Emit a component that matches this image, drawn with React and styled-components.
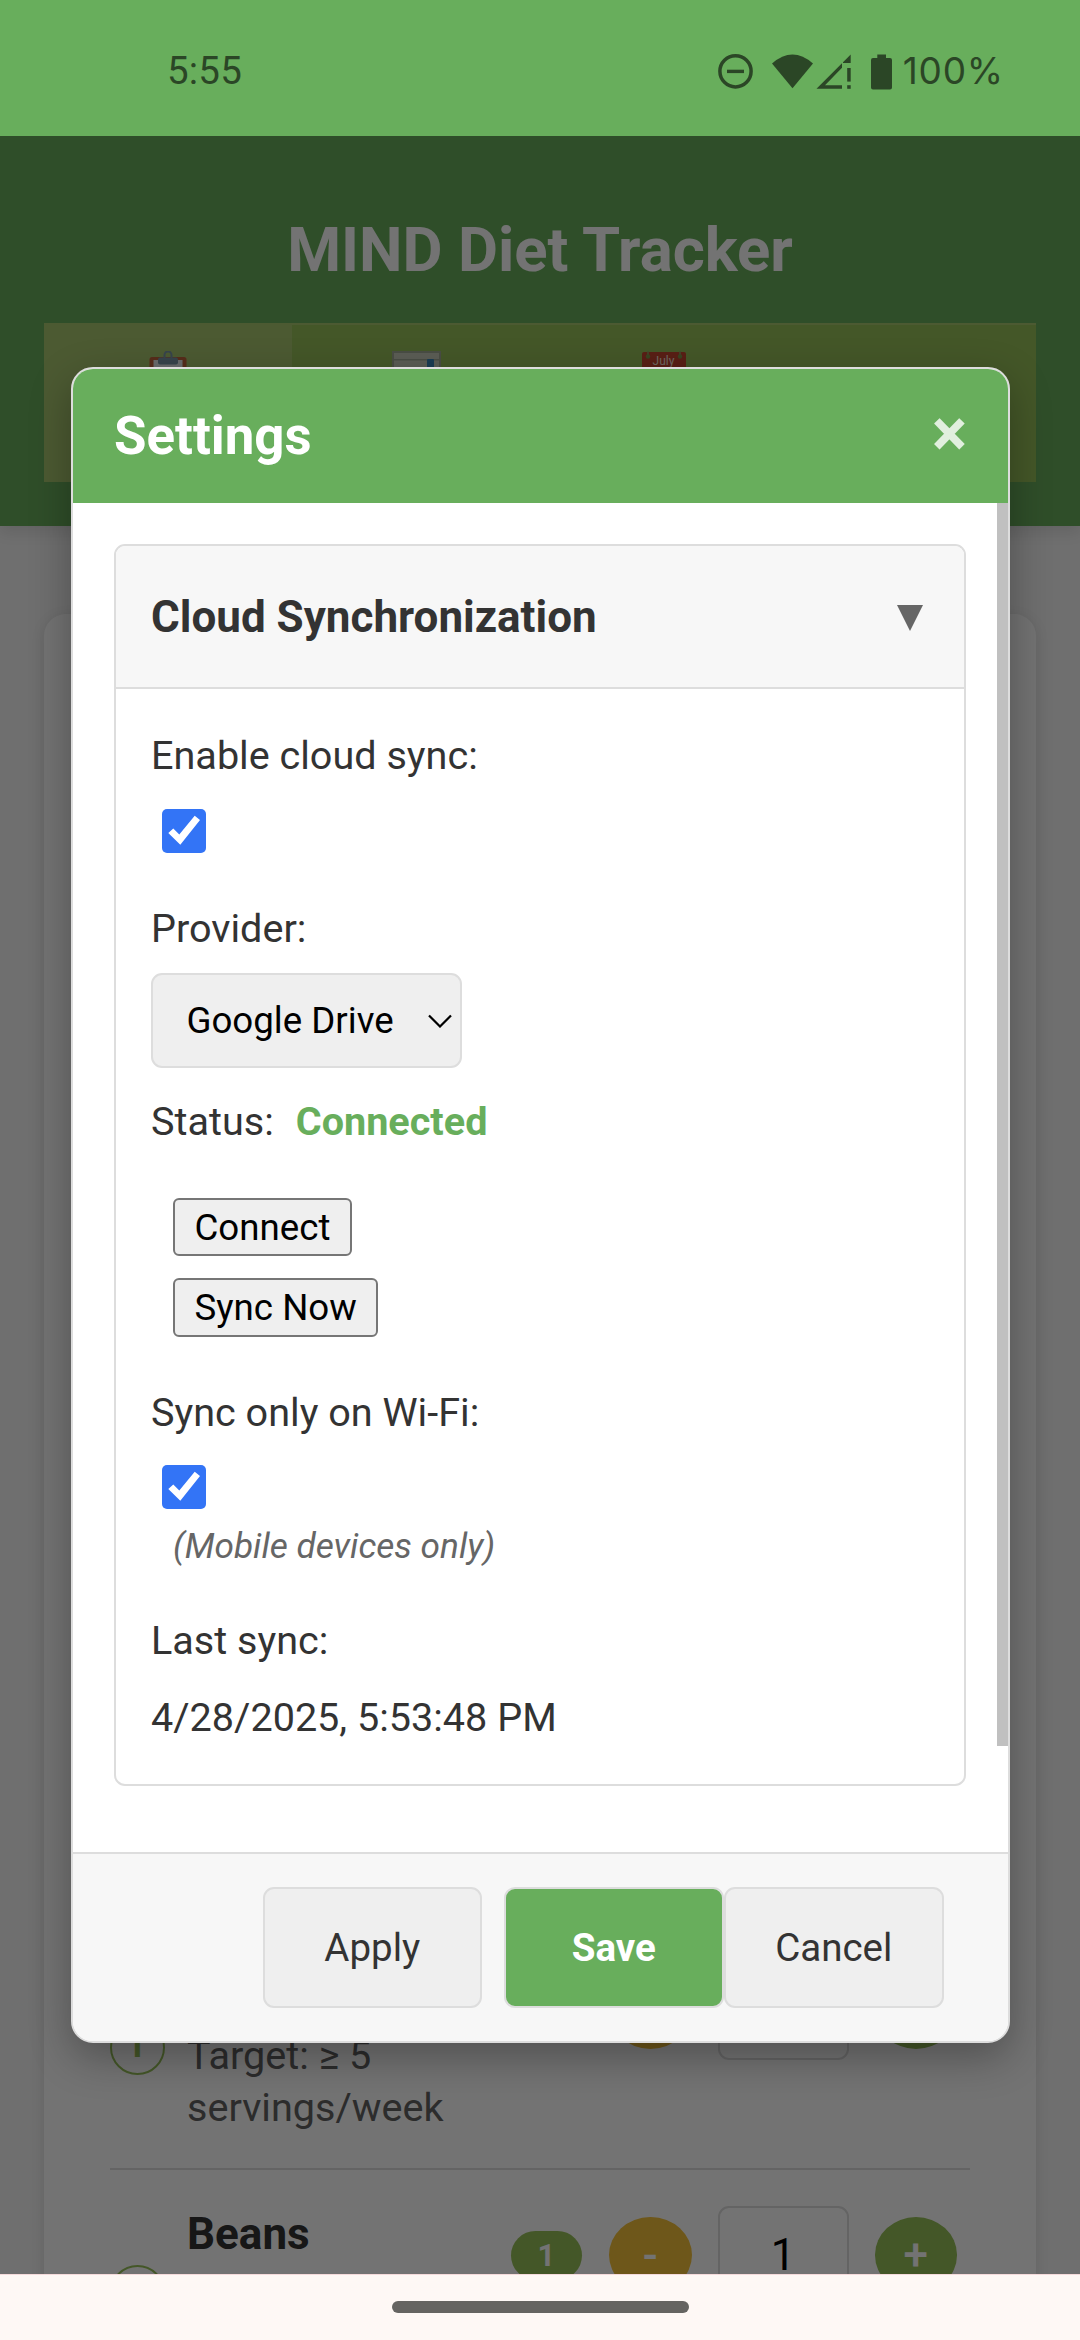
import React, { useState } from "react";
import styled, { createGlobalStyle, css } from "styled-components";

const GREEN = "#68ae5c";
const OLIVE = "#97c159";
const LINE = "#dddddd";

const GlobalStyle = createGlobalStyle`
  *, *::before, *::after { box-sizing: border-box; }
  body { margin: 0; font-family: Roboto, "Noto Sans", sans-serif; color: #333; }
  button, input, select { font-family: inherit; margin: 0; }
`;

const Screen = styled.div`
  width: 1080px;
  height: 2340px;
  display: flex;
  flex-direction: column;
  overflow: hidden;
`;

/* ---------- system bars ---------- */

const StatusBar = styled.header`
  height: 136px;
  flex: none;
  display: flex;
  align-items: center;
  justify-content: space-between;
  padding: 5px 77px 0 167px;
  background: ${GREEN};
  color: #2b4626;
  font-family: Inter, Roboto, sans-serif;
  font-size: 37px;
  line-height: 44px;
`;

const Clock = styled.span`
  font-family: Roboto, sans-serif;
  font-size: 38.500px;
  letter-spacing: 0.2px;
`;

const StatusIcons = styled.div`
  display: flex;
  align-items: center;
  gap: 8px;
`;

const BatteryLevel = styled.span`
  letter-spacing: 0.8px;
  margin-right: -1px;
`;

const NavBar = styled.footer`
  height: 66px;
  flex: none;
  display: flex;
  justify-content: center;
  padding-top: 26px;
  background: #fef8f5;
  border-top: 1px solid #f5dadb;
`;

const NavHandle = styled.div`
  width: 297px;
  height: 12px;
  border-radius: 6px;
  background: #656461;
`;

/* ---------- tracker page ---------- */

const Viewport = styled.div`
  position: relative;
  flex: none;
  height: 2138px;
  overflow: hidden;
  background: #f5f5f5;
`;

const PageHeader = styled.div`
  height: 390px;
  padding: 77px 44px 0;
  background: ${GREEN};
  box-shadow: 0 6px 14px rgba(0, 0, 0, 0.1);
`;

const PageTitle = styled.h1`
  margin: 0;
  height: 110px;
  font-size: 61.6px;
  line-height: 74px;
  font-weight: 700;
  color: #fff;
  text-align: center;
`;

const TabBar = styled.nav`
  display: grid;
  grid-template-columns: repeat(4, 1fr);
  height: 159px;
  border-top: 2px solid #a9c870;
  background: ${OLIVE};
`;

const Tab = styled.div`
  display: flex;
  justify-content: center;
  padding-top: 26px;
  background: ${(p) => (p.$active ? "#a9c870" : "transparent")};
`;

const Card = styled.section`
  height: 1800px;
  margin: 88px 44px 0;
  padding: 1311.5px 66px 0;
  border-radius: 22px;
  background: #fff;
  box-shadow: 0 3px 14px rgba(0, 0, 0, 0.1);
`;

const FoodRow = styled.div`
  display: flex;
  align-items: flex-start;
  height: 244.5px;
  border-bottom: 2px solid ${LINE};
`;

const InfoBadge = styled.span`
  width: 55px;
  height: 55px;
  margin-top: 94.5px;
  border: 2px solid ${OLIVE};
  border-radius: 50%;
  color: ${OLIVE};
  font-size: 35px;
  line-height: 48px;
  font-weight: 700;
  text-align: center;
`;

const FoodText = styled.div`
  width: 310px;
  padding: 33.5px 0 0 22px;
`;

const FoodName = styled.div`
  min-height: 61.5px;
  color: #333;
  font-size: 44px;
  line-height: 61.5px;
  font-weight: 700;
`;

const FoodTarget = styled.div`
  width: 270px;
  margin-top: 9px;
  color: #626262;
  font-size: 39.6px;
  line-height: 52.5px;
`;

const Controls = styled.div`
  display: flex;
  align-items: center;
  height: 98px;
  margin: 36px 0 0 36px;
`;

const Total = styled.span`
  width: 71px;
  height: 49px;
  border-radius: 25px;
  background: ${OLIVE};
  color: #fff;
  font-size: 31px;
  line-height: 49px;
  font-weight: 700;
  text-align: center;
`;

const StepButton = styled.button`
  width: 82.5px;
  height: 76px;
  padding: 0;
  border: 0;
  border-radius: 50%;
  background: ${(p) => (p.$minus ? "#f4c13a" : OLIVE)};
  color: #fff;
  font-size: 44px;
  font-weight: 500;
  line-height: 76px;
`;

const Amount = styled.span`
  width: 131px;
  height: 98px;
  margin: 0 26px;
  border: 2px solid ${LINE};
  border-radius: 11px;
  color: #000;
  font-size: 44px;
  line-height: 95px;
  text-align: center;
`;

/* ---------- settings dialog ---------- */

const Backdrop = styled.div`
  position: absolute;
  inset: 0;
  display: flex;
  align-items: center;
  justify-content: center;
  background: rgba(0, 0, 0, 0.55);
`;

const Modal = styled.div`
  width: 939px;
  height: 1676px;
  margin-left: 1px;
  display: flex;
  flex-direction: column;
  overflow: hidden;
  border: 2px solid ${LINE};
  border-radius: 22px;
  background: #fff;
  box-shadow: 0 14px 41px rgba(0, 0, 0, 0.3);
`;

const ModalHeader = styled.div`
  flex: none;
  height: 134px;
  display: flex;
  align-items: center;
  justify-content: space-between;
  padding: 0 41px;
  background: ${GREEN};
  color: #fff;
`;

const ModalTitle = styled.h2`
  margin: 0;
  font-size: 52.8px;
  line-height: 62px;
  font-weight: 700;
`;

const CloseButton = styled.button`
  padding: 0 0 5px;
  border: 0;
  background: none;
  color: rgba(255, 255, 255, 0.8);
  font-size: 66px;
  line-height: 77px;
  height: 82px;
  font-weight: 700;
`;

const ModalBody = styled.div`
  flex: 1;
  display: flex;
  justify-content: space-between;
  min-height: 0;
`;

const ScrollThumb = styled.div`
  width: 11px;
  height: 1243px;
  background: #c0c0c0;
`;

const Section = styled.section`
  width: 852px;
  height: 1242px;
  margin: 41px 0 0 41px;
  border: 2px solid ${LINE};
  border-radius: 11px;
  overflow: hidden;
`;

const SectionHeader = styled.div`
  height: 143px;
  display: flex;
  align-items: center;
  justify-content: space-between;
  padding: 0 41px 0 35px;
  background: #f7f7f7;
  border-bottom: 2px solid ${LINE};
`;

const SectionTitle = styled.h3`
  margin: 0;
  font-size: 44px;
  line-height: 52px;
  font-weight: 700;
`;

const SectionBody = styled.div`
  display: flex;
  flex-direction: column;
  align-items: flex-start;
  gap: 51px;
  padding: 42px 35px 0;
`;

const Field = styled.div`
  display: flex;
  flex-direction: column;
  align-items: flex-start;
  gap: ${(p) => p.$gap || 0}px;
`;

const Label = styled.span`
  font-size: 39.6px;
  line-height: 49px;
`;

const Status = styled(Label)`
  margin-top: 9px;
`;

const StatusValue = styled.strong`
  margin-left: 22px;
  color: ${GREEN};
`;

const Check = styled.button`
  width: 44px;
  height: 44px;
  margin-left: 11px;
  padding: 0;
  border: 0;
  border-radius: 5px;
  background: #3374f6;
  display: block;
`;

const Hint = styled.em`
  margin: -12px 0 -2px 22px;
  color: #666;
  font-size: 35.2px;
  line-height: 42px;
`;

const Select = styled.div`
  display: flex;
  align-items: center;
  justify-content: space-between;
  width: 311px;
  height: 95px;
  padding: 0 8.5px 0 33.5px;
  border: 2px solid ${LINE};
  border-radius: 11px;
  background: #efefef;
  color: #000;
  font-size: 36.67px;
  line-height: 44px;
`;

const Actions = styled.div`
  display: flex;
  flex-direction: column;
  align-items: flex-start;
  gap: 22px;
  margin: 1px 0 0 22px;
`;

const PlainButton = styled.button`
  height: ${(p) => p.$height}px;
  padding: 0 19.5px;
  border: 2px solid #767676;
  border-radius: 6px;
  background: #efefef;
  color: #000;
  font-size: 36.67px;
  line-height: 43px;
`;

const ModalFooter = styled.div`
  flex: none;
  height: 189px;
  display: flex;
  justify-content: flex-end;
  padding: 33px 64.5px 0 0;
  border-top: 2px solid ${LINE};
  background: #f7f7f7;
`;

const FooterButton = styled.button`
  width: 219.5px;
  height: 121px;
  padding: 0;
  margin-left: ${(p) => p.$gap}px;
  border: 2px solid ${LINE};
  border-radius: 11px;
  background: #efefef;
  color: #333;
  font-size: 38.5px;
  ${(p) =>
    p.$primary &&
    css`
      background: ${GREEN};
      color: #fff;
      font-weight: 700;
    `}
`;

/* ---------- drawings ---------- */

const SystemIcons = () => (
  <svg width="180" height="40" viewBox="714 50 180 40" fill="currentColor">
    <circle cx="734.5" cy="70.3" r="15.6" fill="none" stroke="currentColor" strokeWidth="3.5" />
    <rect x="726" y="68.7" width="17" height="3.4" />
    <path d="M771 62.6Q791.5 44.6 812 62.6L791.5 87.3Z" />
    <path d="M815.5 87.8L841 62.2V66.8L824 84.2H841V87.8ZM842 61.2L849.7 53.4V62H842Z" />
    <rect x="846.2" y="67" width="3.5" height="13.6" />
    <rect x="846.2" y="84.2" width="3.5" height="3.6" />
    <path d="M876.3 53.6H885V57H889Q891 57 891 59V86.6Q891 88.6 889 88.6H872Q870 88.6 870 86.6V59Q870 57 872 57H876.3Z" />
  </svg>
);

const ClipboardIcon = () => (
  <svg width="40" height="50" viewBox="0 0 40 50">
    <rect x="1.5" y="6" width="37" height="44" rx="2.5" fill="#c1653d" />
    <rect x="5.5" y="9" width="29" height="40" fill="#eceff1" />
    <path d="M16.500 8V4a3.500 3.500 0 0 1 7 0V8" fill="none" stroke="#7a98a8" strokeWidth="2" />
    <rect x="10" y="6.500" width="20" height="7" rx="2" fill="#7a98a8" />
  </svg>
);

const ChartIcon = () => (
  <svg width="49" height="50" viewBox="0 0 49 50">
    <rect width="49" height="50" fill="#a2ab97" />
    <rect x="2" y="2" width="45" height="48" fill="#c9cfbd" />
    <rect y="8" width="49" height="1.500" fill="#a2ab97" />
    <rect x="35" y="8" width="7" height="42" rx="1" fill="#3b86b8" />
  </svg>
);

const CalendarIcon = () => (
  <svg width="44" height="50" viewBox="0 0 44 50">
    <rect y="1" width="44" height="49" rx="2" fill="#c5452f" />
    <path d="M6 0V5M38 0V5" stroke="#97a06a" strokeWidth="1.500" />
    <circle cx="6" cy="5.500" r="2.200" fill="#7e9a4a" />
    <circle cx="38" cy="5.500" r="2.200" fill="#7e9a4a" />
    <text x="21.500" y="13.500" textAnchor="middle" fontSize="12" fontFamily="Roboto, sans-serif" fill="#f2e6d8">
      July
    </text>
  </svg>
);

const TickMark = () => (
  <svg width="44" height="44" viewBox="0 0 44 44">
    <path d="M32.7 6.700L38 11L18.300 35.700L6.300 24L11.300 19.500L17.300 25.500Z" fill="#fff" />
  </svg>
);

const ArrowDown = () => (
  <svg width="26" height="28" viewBox="0 -2 26 28">
    <path d="M0 0H26L13 26Z" fill="#666" />
  </svg>
);

const Chevron = () => (
  <svg width="24" height="14" viewBox="0 0 24 14">
    <path d="M1 1.500L12 12.500L23 1.500" fill="none" stroke="#000" strokeWidth="2.200" />
  </svg>
);

function Food({ name, target, total }) {
  return (
    <FoodRow>
      <InfoBadge>i</InfoBadge>
      <FoodText>
        <FoodName>{name}</FoodName>
        <FoodTarget>{target}</FoodTarget>
      </FoodText>
      <Controls>
        <Total style={{ marginRight: 27 }}>{total}</Total>
        <StepButton $minus>-</StepButton>
        <Amount>{total}</Amount>
        <StepButton>+</StepButton>
      </Controls>
    </FoodRow>
  );
}

function Checkbox({ label }) {
  const [on, setOn] = useState(true);
  return (
    <Check role="checkbox" aria-checked={on} aria-label={label} onClick={() => setOn(!on)}>
      {on && <TickMark />}
    </Check>
  );
}

export default function App() {
  return (
    <Screen>
      <GlobalStyle />
      <StatusBar>
        <Clock>5:55</Clock>
        <StatusIcons>
          <SystemIcons />
          <BatteryLevel>100%</BatteryLevel>
        </StatusIcons>
      </StatusBar>
      <Viewport>
        <PageHeader>
          <PageTitle>MIND Diet Tracker</PageTitle>
          <TabBar>
            <Tab $active><ClipboardIcon /></Tab>
            <Tab><ChartIcon /></Tab>
            <Tab><CalendarIcon /></Tab>
            <Tab />
          </TabBar>
        </PageHeader>
        <Card>
          <Food target="Target: ≥ 5 servings/week" />
          <Food name="Beans" total="1" />
        </Card>
        <Backdrop>
          <Modal role="dialog" aria-label="Settings">
            <ModalHeader>
              <ModalTitle>Settings</ModalTitle>
              <CloseButton>×</CloseButton>
            </ModalHeader>
            <ModalBody>
              <Section>
                <SectionHeader>
                  <SectionTitle>Cloud Synchronization</SectionTitle>
                  <ArrowDown />
                </SectionHeader>
                <SectionBody>
                  <Field $gap={29}>
                    <Label>Enable cloud sync:</Label>
                    <Checkbox label="Enable cloud sync" />
                  </Field>
                  <Field $gap={20}>
                    <Label>Provider:</Label>
                    <Select>
                      Google Drive
                      <Chevron />
                    </Select>
                    <Status>
                      Status:<StatusValue>Connected</StatusValue>
                    </Status>
                  </Field>
                  <Actions>
                    <PlainButton $height={58}>Connect</PlainButton>
                    <PlainButton $height={59}>Sync Now</PlainButton>
                  </Actions>
                  <Field $gap={28}>
                    <Label>Sync only on Wi-Fi:</Label>
                    <Checkbox label="Sync only on Wi-Fi" />
                    <Hint>(Mobile devices only)</Hint>
                  </Field>
                  <Field $gap={28}>
                    <Label>Last sync:</Label>
                    <Label>4/28/2025, 5:53:48 PM</Label>
                  </Field>
                </SectionBody>
              </Section>
              <ScrollThumb />
            </ModalBody>
            <ModalFooter>
              <FooterButton>Apply</FooterButton>
              <FooterButton $primary $gap={22}>Save</FooterButton>
              <FooterButton $gap={0.5}>Cancel</FooterButton>
            </ModalFooter>
          </Modal>
        </Backdrop>
      </Viewport>
      <NavBar>
        <NavHandle />
      </NavBar>
    </Screen>
  );
}
